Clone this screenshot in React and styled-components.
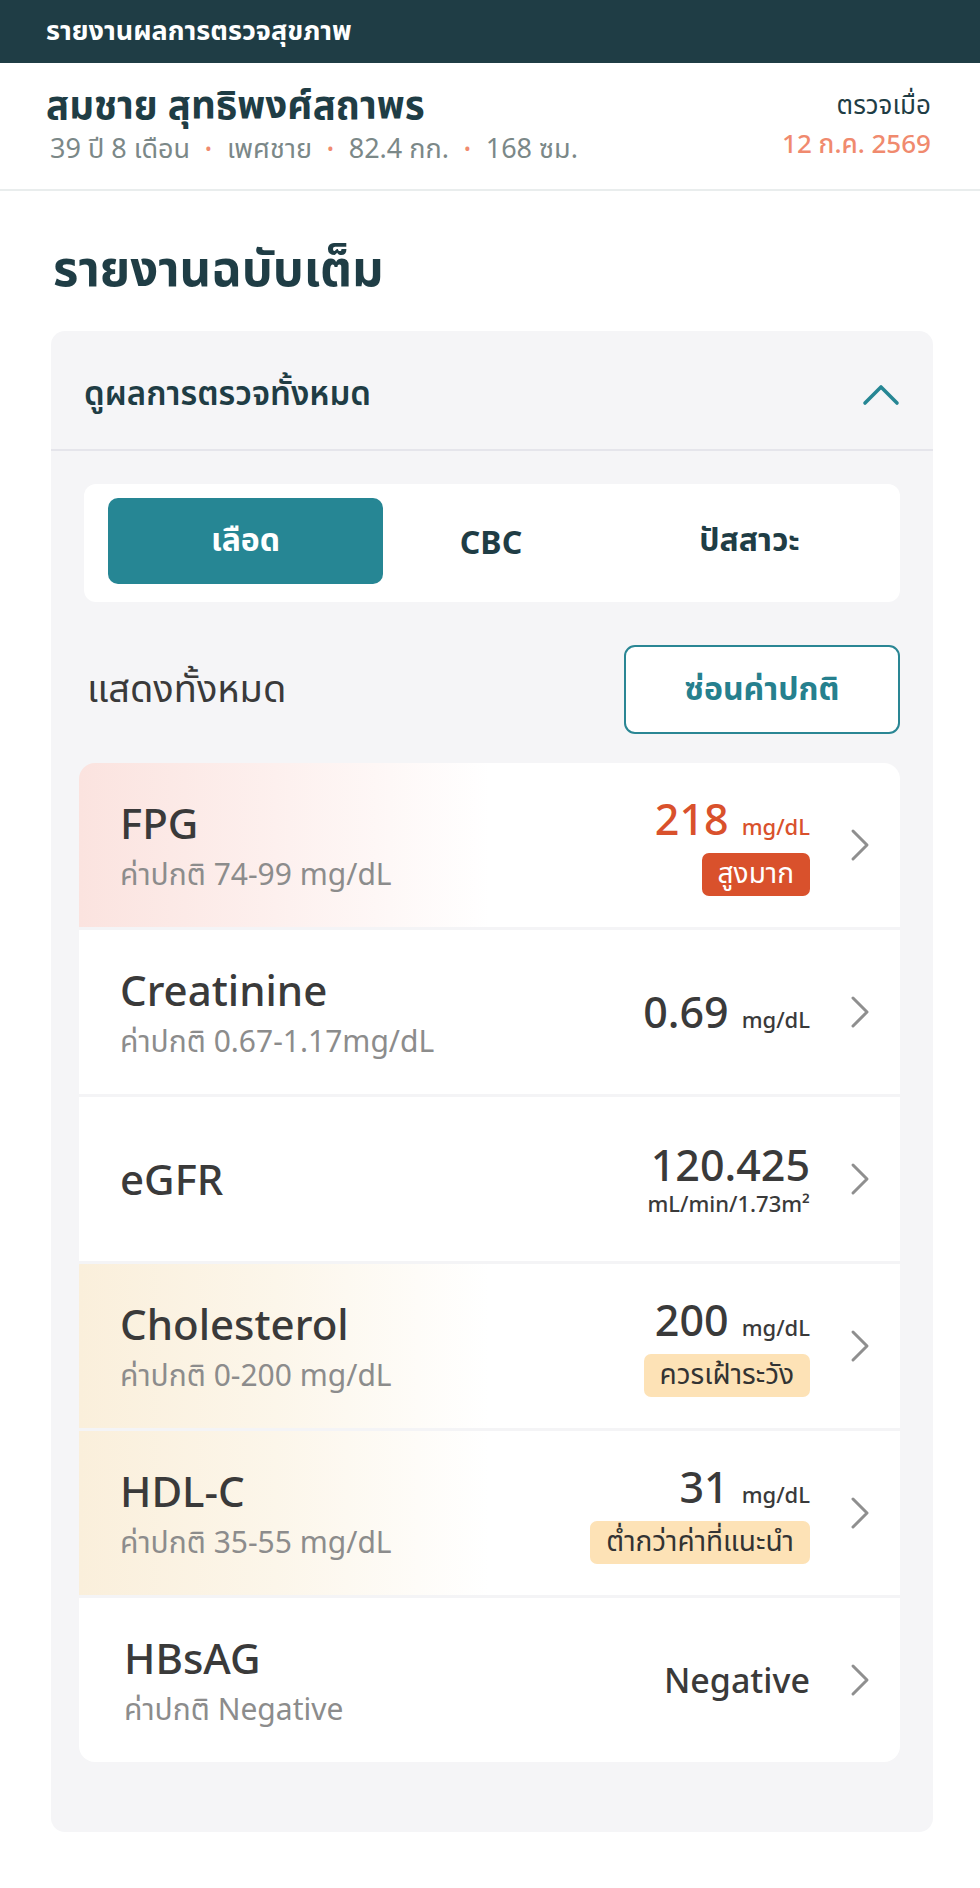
import React from "react";
import styled, { createGlobalStyle, css } from "styled-components";

const GlobalStyle = createGlobalStyle`
  html, body { margin: 0; padding: 0; background: #ffffff; }
  body {
    font-family: "Noto Sans", "Noto Sans Thai", "Noto Sans Thai UI", sans-serif;
    color: #3a3a3a;
    -webkit-font-smoothing: antialiased;
  }
  * { box-sizing: border-box; }
`;

const Page = styled.div`
  width: 980px;
  min-height: 1888px;
  background: #ffffff;
`;

const TopBar = styled.header`
  height: 63px;
  background: #1f3d45;
  display: flex;
  align-items: center;
  padding: 0 46px;
  color: #ffffff;
  font-size: 27px;
  font-weight: 700;
`;

const PatientBar = styled.section`
  height: 128px;
  display: flex;
  justify-content: space-between;
  align-items: center;
  padding: 0 49px 5px 46px;
  border-bottom: 2px solid #e9eded;
`;

const PatientLeft = styled.div`
  display: flex;
  flex-direction: column;
  gap: 5px;
`;

const PatientName = styled.div`
  font-size: 38.5px;
  font-weight: 700;
  color: #1f3d45;
  line-height: 44px;
`;

const PatientMeta = styled.div`
  font-size: 27px;
  color: #7b8888;
  line-height: 34px;
  display: flex;
  align-items: center;
  padding-left: 4px;
`;

const Dot = styled.span`
  color: #f08a6e;
  margin: 0 15px;
  font-size: 18px;
`;

const PatientRight = styled.div`
  display: flex;
  flex-direction: column;
  align-items: flex-end;
  gap: 3px;
`;

const DateLabel = styled.div`
  font-size: 26px;
  color: #1f3d45;
  line-height: 36px;
`;

const DateValue = styled.div`
  font-size: 26px;
  font-weight: 500;
  color: #f08a6e;
  line-height: 36px;
`;

const Main = styled.main`
  padding: 0 47px 54px 51px;
`;

const PageTitle = styled.h1`
  margin: 0;
  height: 140px;
  display: flex;
  align-items: center;
  padding: 20px 0 0 2px;
  font-size: 49px;
  font-weight: 700;
  color: #1f3d45;
`;

const Card = styled.div`
  background: #f5f5f7;
  border-radius: 14px;
  padding-bottom: 70px;
`;

const CardHeader = styled.div`
  height: 120px;
  display: flex;
  align-items: center;
  justify-content: space-between;
  padding: 10px 33px 0 33px;
  border-bottom: 2px solid #e5e5eb;
`;

const CardHeaderTitle = styled.div`
  font-size: 33px;
  font-weight: 600;
  color: #1f3d45;
`;

const CardBody = styled.div`
  padding: 33px 33px 0 33px;
`;

const Tabs = styled.div`
  background: #ffffff;
  border-radius: 12px;
  height: 118px;
  padding: 14px 0 18px 24px;
  display: grid;
  grid-template-columns: 275px 216px 1fr;
`;

const Tab = styled.button`
  border: none;
  border-radius: 10px;
  font-family: inherit;
  font-size: 32px;
  font-weight: 700;
  cursor: pointer;
  background: ${(p) => (p.$active ? "#268694" : "transparent")};
  color: ${(p) => (p.$active ? "#ffffff" : "#1f3d45")};
`;

const FilterRow = styled.div`
  display: flex;
  align-items: center;
  justify-content: space-between;
  margin-top: 43px;
  padding-left: 3px;
`;

const FilterLabel = styled.div`
  font-size: 38px;
  color: #3a3a3a;
`;

const OutlineButton = styled.button`
  width: 276px;
  height: 89px;
  border: 2px solid #2a8694;
  border-radius: 11px;
  background: #ffffff;
  font-family: inherit;
  font-size: 32px;
  font-weight: 700;
  color: #26808e;
  cursor: pointer;
`;

const List = styled.div`
  margin: 29px 0 0 -5px;
  background: #f4f4f6;
  border-radius: 16px;
  overflow: hidden;
  display: flex;
  flex-direction: column;
  gap: 3px;
`;

const tones = {
  high: css`background: linear-gradient(90deg, #fbe3df 0%, #fdf0ee 24%, #ffffff 50%);`,
  warn: css`background: linear-gradient(90deg, #faefdb 0%, #fcf6ea 24%, #ffffff 50%);`,
  normal: css`background: #ffffff;`,
};

const Row = styled.div`
  height: 164px;
  display: grid;
  grid-template-columns: 1fr auto 20px;
  align-items: center;
  column-gap: 40px;
  padding: 0 30px 0 41px;
  ${(p) => tones[p.$tone || "normal"]}
`;

const NameBlock = styled.div`
  display: flex;
  flex-direction: column;
  gap: 9px;
  padding-left: ${(p) => p.$indent || 0}px;
`;

const TestName = styled.div`
  font-size: 42px;
  font-weight: 500;
  color: #3a3a3a;
  line-height: 48px;
`;

const Range = styled.div`
  font-size: 30px;
  color: #8c8c8c;
  line-height: 36px;
`;

const ValueBlock = styled.div`
  display: flex;
  flex-direction: column;
  align-items: flex-end;
  gap: ${(p) => (p.$stacked ? 0 : 10)}px;
`;

const ValueLine = styled.div`
  display: flex;
  align-items: baseline;
  gap: 13px;
  color: ${(p) => (p.$tone === "high" ? "#d9512c" : "#3a3a3a")};
`;

const ValueNum = styled.span`
  font-size: ${(p) => p.$size || 43}px;
  font-weight: 500;
  line-height: 48px;
`;

const Unit = styled.span`
  font-size: 22px;
  font-weight: 500;
  line-height: 28px;
`;

const Badge = styled.span`
  height: 43px;
  display: inline-flex;
  align-items: center;
  padding: 0 16px;
  border-radius: 7px;
  font-size: 28px;
  ${(p) =>
    p.$tone === "high"
      ? css`background: #d9512c; color: #ffffff;`
      : css`background: #fde2b6; color: #333333;`}
`;

const Chevron = styled.svg`
  width: 20px;
  height: 34px;
  display: block;
`;

const ChevronRight = () => (
  <Chevron viewBox="0 0 20 34" fill="none">
    <path d="M3 3 L17 17 L3 31" stroke="#8f8f8f" strokeWidth="3" strokeLinecap="round" strokeLinejoin="round" />
  </Chevron>
);

const ChevronUp = () => (
  <svg width="38" height="22" viewBox="0 0 38 22" fill="none">
    <path d="M3 19 L19 3 L35 19" stroke="#268694" strokeWidth="3.6" strokeLinecap="round" strokeLinejoin="round" />
  </svg>
);

const results = [
  { name: "FPG", range: "ค่าปกติ 74-99 mg/dL", value: "218", unit: "mg/dL", tone: "high", badge: "สูงมาก" },
  { name: "Creatinine", range: "ค่าปกติ 0.67-1.17mg/dL", value: "0.69", unit: "mg/dL" },
  { name: "eGFR", value: "120.425", unit: "mL/min/1.73m²", stacked: true },
  { name: "Cholesterol", range: "ค่าปกติ 0-200 mg/dL", value: "200", unit: "mg/dL", tone: "warn", badge: "ควรเฝ้าระวัง" },
  { name: "HDL-C", range: "ค่าปกติ 35-55 mg/dL", value: "31", unit: "mg/dL", tone: "warn", badge: "ต่ำกว่าค่าที่แนะนำ" },
  { name: "HBsAG", range: "ค่าปกติ Negative", value: "Negative", text: true, indent: 4 },
];

export default function App() {
  return (
    <Page>
      <GlobalStyle />
      <TopBar>รายงานผลการตรวจสุขภาพ</TopBar>
      <PatientBar>
        <PatientLeft>
          <PatientName>สมชาย สุทธิพงศ์สถาพร</PatientName>
          <PatientMeta>
            39 ปี 8 เดือน<Dot>•</Dot>เพศชาย<Dot>•</Dot>82.4 กก.<Dot>•</Dot>168 ซม.
          </PatientMeta>
        </PatientLeft>
        <PatientRight>
          <DateLabel>ตรวจเมื่อ</DateLabel>
          <DateValue>12 ก.ค. 2569</DateValue>
        </PatientRight>
      </PatientBar>
      <Main>
        <PageTitle>รายงานฉบับเต็ม</PageTitle>
        <Card>
          <CardHeader>
            <CardHeaderTitle>ดูผลการตรวจทั้งหมด</CardHeaderTitle>
            <ChevronUp />
          </CardHeader>
          <CardBody>
            <Tabs>
              <Tab $active>เลือด</Tab>
              <Tab>CBC</Tab>
              <Tab>ปัสสาวะ</Tab>
            </Tabs>
            <FilterRow>
              <FilterLabel>แสดงทั้งหมด</FilterLabel>
              <OutlineButton>ซ่อนค่าปกติ</OutlineButton>
            </FilterRow>
            <List>
              {results.map((r) => (
                <Row key={r.name} $tone={r.tone}>
                  <NameBlock $indent={r.indent}>
                    <TestName>{r.name}</TestName>
                    {r.range && <Range>{r.range}</Range>}
                  </NameBlock>
                  <ValueBlock $stacked={r.stacked}>
                    {r.stacked ? (
                      <>
                        <ValueLine>
                          <ValueNum>{r.value}</ValueNum>
                        </ValueLine>
                        <Unit>{r.unit}</Unit>
                      </>
                    ) : (
                      <ValueLine $tone={r.tone}>
                        <ValueNum $size={r.text ? 34 : 43}>{r.value}</ValueNum>
                        {r.unit && <Unit>{r.unit}</Unit>}
                      </ValueLine>
                    )}
                    {r.badge && <Badge $tone={r.tone}>{r.badge}</Badge>}
                  </ValueBlock>
                  <ChevronRight />
                </Row>
              ))}
            </List>
          </CardBody>
        </Card>
      </Main>
    </Page>
  );
}
